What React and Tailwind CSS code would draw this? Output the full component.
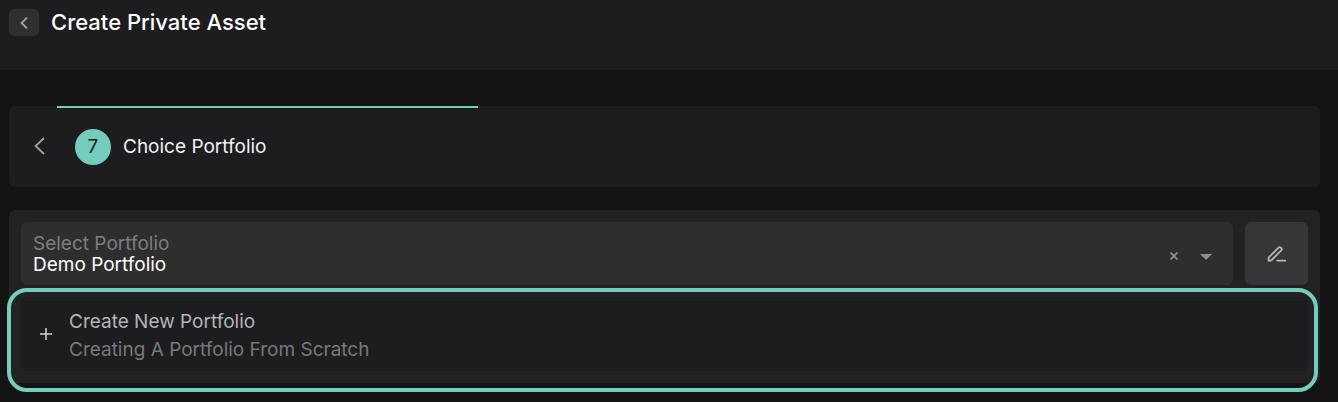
import { useState } from 'react';

const PORTFOLIOS = [
  { value: 'demo', label: 'Demo Portfolio' },
];

const STEP = { number: 7, title: 'Choice Portfolio' };

function Header() {
  return (
    <header className="flex h-[70px] items-start gap-3 bg-[#1d1d1f] px-[9px] pt-2">
      <button
        type="button"
        aria-label="Back"
        className="mt-px flex h-[27px] w-[30px] items-center justify-center rounded-[5px] bg-[#2f2f31] text-[#a0a0a6]"
      >
        <svg className="h-3 w-2" viewBox="0 0 8 12" fill="none" stroke="currentColor" strokeWidth="1.9">
          <path d="M7 .6 1.6 6 7 11.4" />
        </svg>
      </button>
      <h1 className="text-[22px] leading-7 font-medium text-white">Create Private Asset</h1>
    </header>
  );
}

function Steps() {
  return (
    <nav className="flex h-[81px] overflow-hidden rounded-md bg-[#1d1d1f]">
      <button type="button" aria-label="Previous step" className="flex w-12 items-center pb-0.5 pl-[25px] text-[#a0a0a6]">
        <svg className="h-[18px] w-[11px]" viewBox="0 0 11 18" fill="none" stroke="currentColor" strokeWidth="1.8">
          <path d="M10 1 1.6 9l8.4 8" />
        </svg>
      </button>
      <div className="grid flex-1 grid-cols-3">
        <div className="flex items-center gap-3 border-y-2 border-t-[#74cdbc] border-b-transparent pl-[18px]">
          <span className="flex size-9 items-center justify-center rounded-full bg-[#74cdbc] text-[19px] leading-7 text-[#1d1d1f]">
            {STEP.number}
          </span>
          <span className="text-[19px] leading-7 text-[#f2f2f3]">{STEP.title}</span>
        </div>
      </div>
    </nav>
  );
}

export default function App() {
  const [portfolio, setPortfolio] = useState('demo');

  return (
    <div className="min-h-screen bg-[#131313] font-['Inter',sans-serif]">
      <Header />

      <main className="pt-9 pr-[18px] pl-[9px]">
        <Steps />

        <section className="mt-[23px] rounded-md bg-[#222222] p-3">
          {/* Portfolio select */}
          <div className="flex gap-3">
            <div className="flex h-[63px] flex-1 items-center rounded-md bg-[#2e2e2e] px-3">
              <div className="flex flex-1 flex-col">
                <label htmlFor="portfolio" className="text-[19px] leading-[21px] text-[#7d7d82]">Select Portfolio</label>
                <select
                  id="portfolio"
                  value={portfolio}
                  onChange={e => setPortfolio(e.target.value)}
                  className="h-[21px] w-full appearance-none bg-transparent text-[19px] leading-[21px] text-white outline-none"
                >
                  <option value="" />
                  {PORTFOLIOS.map(p => (
                    <option key={p.value} value={p.value}>{p.label}</option>
                  ))}
                </select>
              </div>
              <button
                type="button"
                aria-label="Clear"
                onClick={() => setPortfolio('')}
                className="flex size-6 items-center justify-center pt-1 text-[#8e8e94]"
              >
                <svg className="size-2" viewBox="0 0 8 8" stroke="currentColor" strokeWidth="1.8">
                  <path d="m.5.5 7 7M7.5.5l-7 7" />
                </svg>
              </button>
              <svg className="mt-1.5 mr-[9px] ml-[14px] h-[6px] w-3 text-[#8e8e94]" viewBox="0 0 12 6" fill="currentColor">
                <path d="M0 0h12L6 6z" />
              </svg>
            </div>
            <button
              type="button"
              aria-label="Edit portfolio"
              className="flex size-[63px] items-center justify-center rounded-md bg-[#363638] text-[#b4b4ba]"
            >
              <svg className="h-[18px] w-5" viewBox="0 0 20 18" fill="none" stroke="currentColor" strokeWidth="1.8">
                <path d="M1.6 15.8V12.7L11.6 2.6a1.5 1.5 0 0 1 2.1 0l.6.6a1.5 1.5 0 0 1 0 2.1L4.7 15c-.8.7-1.8.8-3.1.8z" strokeLinejoin="round" />
                <path d="M10.2 15.7h8" strokeLinecap="round" />
              </svg>
            </button>
          </div>

          {/* Create new */}
          <div className="relative mt-3">
            <button type="button" className="flex h-[74px] w-full items-center rounded-md bg-[#1d1d1f] pl-[19px] text-left text-[19px]">
              <svg className="mr-[17px] size-3 text-[#d4d4d8]" viewBox="0 0 12 12" stroke="currentColor" strokeWidth="1.5">
                <path d="M6 0v12M0 6h12" />
              </svg>
              <span className="flex flex-col pt-1 leading-7">
                <span className="text-[#b4b4bb]">Create New Portfolio</span>
                <span className="text-[#78787e]">Creating A Portfolio From Scratch</span>
              </span>
            </button>
            <div className="pointer-events-none absolute -top-[9px] -right-[10px] -bottom-[21px] -left-[14px] rounded-[20px] border-4 border-[#74cdbc]" />
          </div>
        </section>
      </main>
    </div>
  );
}
